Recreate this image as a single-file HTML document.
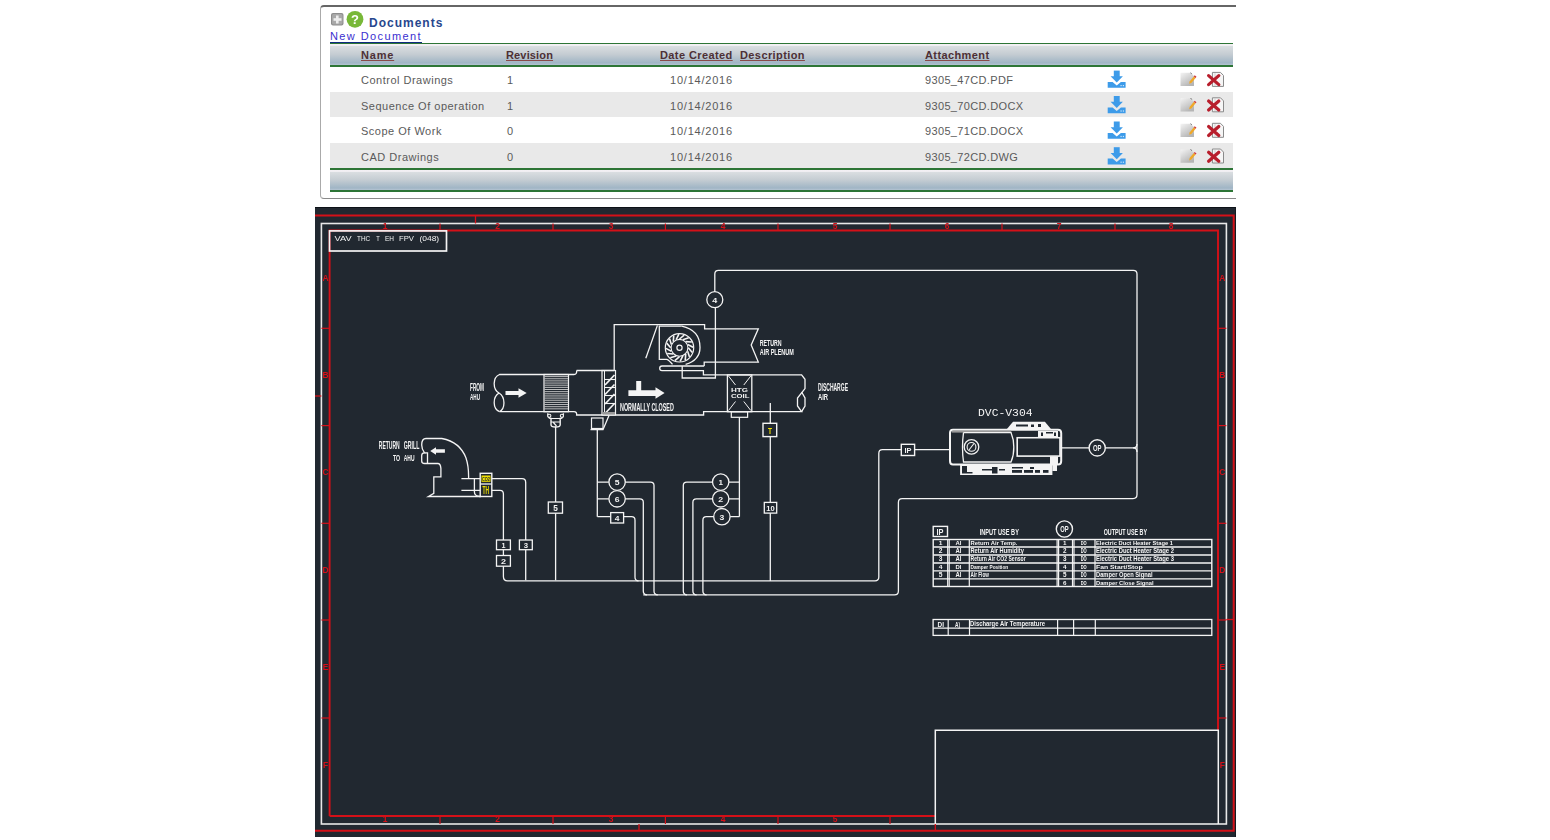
<!DOCTYPE html>
<html><head><meta charset="utf-8">
<style>
html,body{margin:0;padding:0;background:#fff;width:1550px;height:840px;overflow:hidden;position:relative;font-family:"Liberation Sans",sans-serif;}
.a{position:absolute;}
#panel{left:320px;top:5px;width:916px;height:194.3px;border-top:2px solid #666;border-left:1px solid #aaa;border-bottom:1.3px solid #8a8a8a;border-top-left-radius:4px;border-bottom-left-radius:4px;box-sizing:border-box;}
.hdr{left:330px;width:903px;background:linear-gradient(#f4f0f4 0,#f0eef2 1.5px,#dadee1 2px,#c4ccd2 50%,#a0b5c5 90%,#b4c4d2 100%);}
.gl{left:330px;width:903px;height:2px;background:#2d7536;}
.row{left:330px;width:903px;height:25px;}
.alt{background:#e9e9e9;}
.t{position:absolute;font-size:11px;color:#5a5a5a;letter-spacing:0.5px;white-space:nowrap;line-height:13px;}
.h{position:absolute;font-size:11px;font-weight:bold;color:#4d3035;text-decoration:underline;text-decoration-color:#8a4a4a;white-space:nowrap;line-height:13px;letter-spacing:0.4px}
#cad{left:315px;top:207px;width:921px;height:630px;background:#212830;border-top:1.5px solid #0d1218;border-right:1px solid #151a20;box-sizing:border-box;}
svg{position:absolute;left:0;top:0;}
</style></head><body>
<div id="panel" class="a"></div>
<!-- icons -->
<svg width="1550" height="210" style="left:0;top:0;z-index:3">
  <rect x="331" y="13" width="12.5" height="12.5" rx="2" fill="#8d8d8d"/>
  <rect x="332" y="14" width="10.5" height="10.5" rx="1.5" fill="#a9a9a9"/>
  <rect x="336" y="15.5" width="2.6" height="8" fill="#eee"/>
  <rect x="333.5" y="18.2" width="8" height="2.6" fill="#eee"/>
  <defs><linearGradient id="pg" x1="0" y1="0" x2="0.6" y2="1"><stop offset="0" stop-color="#f4f4f4"/><stop offset="1" stop-color="#b5b5b5"/></linearGradient></defs>
<g transform="translate(0,0)">
<rect x="1113.8" y="70.6" width="5.9" height="6.4" fill="#3d9be9"/>
<path d="M1110.6,76.3 H1122.9 L1116.75,82.6 Z" fill="#3d9be9"/>
<path d="M1107.7,82 H1112.6 L1116.75,85.5 L1120.9,82 H1125.6 V87.8 H1107.7 Z" fill="#3d9be9"/>
<rect x="1120.5" y="85" width="1.2" height="1.2" fill="#cfe6fa"/><rect x="1122.8" y="85" width="1.2" height="1.2" fill="#cfe6fa"/>
<path d="M1180.5,72.8 H1190 L1194,76 V86.1 H1180.5 Z" fill="url(#pg)"/>
<path d="M1189.6,81.5 L1193.8,76.4 L1195.6,77.9 L1191.4,83 L1189.2,83.8 Z" fill="#f0a828"/>
<path d="M1193.8,76.4 L1195.6,77.9 L1196.5,76.8 L1194.7,75.3 Z" fill="#d03838"/><path d="M1190.6,72.6 L1191.8,74.2" stroke="#555" stroke-width="0.8"/>
<path d="M1212.4,72.4 H1220.5 L1223.5,75.5 V86.4 H1212.4 Z" fill="#f6f6f6" stroke="#8a8a8a" stroke-width="1"/>
<path d="M1215,73.2 V85.6" stroke="#c8c8c8" stroke-width="0.8"/>
<path d="M1208.6,75.6 L1218.8,84.6 M1218.8,75.6 L1208.6,84.6" stroke="#b81e2c" stroke-width="3.2" stroke-linecap="round"/>
</g>
<g transform="translate(0,25.4)">
<rect x="1113.8" y="70.6" width="5.9" height="6.4" fill="#3d9be9"/>
<path d="M1110.6,76.3 H1122.9 L1116.75,82.6 Z" fill="#3d9be9"/>
<path d="M1107.7,82 H1112.6 L1116.75,85.5 L1120.9,82 H1125.6 V87.8 H1107.7 Z" fill="#3d9be9"/>
<rect x="1120.5" y="85" width="1.2" height="1.2" fill="#cfe6fa"/><rect x="1122.8" y="85" width="1.2" height="1.2" fill="#cfe6fa"/>
<path d="M1180.5,72.8 H1190 L1194,76 V86.1 H1180.5 Z" fill="url(#pg)"/>
<path d="M1189.6,81.5 L1193.8,76.4 L1195.6,77.9 L1191.4,83 L1189.2,83.8 Z" fill="#f0a828"/>
<path d="M1193.8,76.4 L1195.6,77.9 L1196.5,76.8 L1194.7,75.3 Z" fill="#d03838"/><path d="M1190.6,72.6 L1191.8,74.2" stroke="#555" stroke-width="0.8"/>
<path d="M1212.4,72.4 H1220.5 L1223.5,75.5 V86.4 H1212.4 Z" fill="#f6f6f6" stroke="#8a8a8a" stroke-width="1"/>
<path d="M1215,73.2 V85.6" stroke="#c8c8c8" stroke-width="0.8"/>
<path d="M1208.6,75.6 L1218.8,84.6 M1218.8,75.6 L1208.6,84.6" stroke="#b81e2c" stroke-width="3.2" stroke-linecap="round"/>
</g>
<g transform="translate(0,50.9)">
<rect x="1113.8" y="70.6" width="5.9" height="6.4" fill="#3d9be9"/>
<path d="M1110.6,76.3 H1122.9 L1116.75,82.6 Z" fill="#3d9be9"/>
<path d="M1107.7,82 H1112.6 L1116.75,85.5 L1120.9,82 H1125.6 V87.8 H1107.7 Z" fill="#3d9be9"/>
<rect x="1120.5" y="85" width="1.2" height="1.2" fill="#cfe6fa"/><rect x="1122.8" y="85" width="1.2" height="1.2" fill="#cfe6fa"/>
<path d="M1180.5,72.8 H1190 L1194,76 V86.1 H1180.5 Z" fill="url(#pg)"/>
<path d="M1189.6,81.5 L1193.8,76.4 L1195.6,77.9 L1191.4,83 L1189.2,83.8 Z" fill="#f0a828"/>
<path d="M1193.8,76.4 L1195.6,77.9 L1196.5,76.8 L1194.7,75.3 Z" fill="#d03838"/><path d="M1190.6,72.6 L1191.8,74.2" stroke="#555" stroke-width="0.8"/>
<path d="M1212.4,72.4 H1220.5 L1223.5,75.5 V86.4 H1212.4 Z" fill="#f6f6f6" stroke="#8a8a8a" stroke-width="1"/>
<path d="M1215,73.2 V85.6" stroke="#c8c8c8" stroke-width="0.8"/>
<path d="M1208.6,75.6 L1218.8,84.6 M1218.8,75.6 L1208.6,84.6" stroke="#b81e2c" stroke-width="3.2" stroke-linecap="round"/>
</g>
<g transform="translate(0,76.6)">
<rect x="1113.8" y="70.6" width="5.9" height="6.4" fill="#3d9be9"/>
<path d="M1110.6,76.3 H1122.9 L1116.75,82.6 Z" fill="#3d9be9"/>
<path d="M1107.7,82 H1112.6 L1116.75,85.5 L1120.9,82 H1125.6 V87.8 H1107.7 Z" fill="#3d9be9"/>
<rect x="1120.5" y="85" width="1.2" height="1.2" fill="#cfe6fa"/><rect x="1122.8" y="85" width="1.2" height="1.2" fill="#cfe6fa"/>
<path d="M1180.5,72.8 H1190 L1194,76 V86.1 H1180.5 Z" fill="url(#pg)"/>
<path d="M1189.6,81.5 L1193.8,76.4 L1195.6,77.9 L1191.4,83 L1189.2,83.8 Z" fill="#f0a828"/>
<path d="M1193.8,76.4 L1195.6,77.9 L1196.5,76.8 L1194.7,75.3 Z" fill="#d03838"/><path d="M1190.6,72.6 L1191.8,74.2" stroke="#555" stroke-width="0.8"/>
<path d="M1212.4,72.4 H1220.5 L1223.5,75.5 V86.4 H1212.4 Z" fill="#f6f6f6" stroke="#8a8a8a" stroke-width="1"/>
<path d="M1215,73.2 V85.6" stroke="#c8c8c8" stroke-width="0.8"/>
<path d="M1208.6,75.6 L1218.8,84.6 M1218.8,75.6 L1208.6,84.6" stroke="#b81e2c" stroke-width="3.2" stroke-linecap="round"/>
</g>
<circle cx="355" cy="19.3" r="8.4" fill="#78b838"/>
  <text x="355" y="24.2" font-size="13" font-weight="bold" fill="#fff" text-anchor="middle" font-family="Liberation Sans">?</text>
</svg>
<div class="t" style="left:369px;top:16px;font-size:12px;font-weight:bold;color:#27478e;line-height:14px;letter-spacing:1px">Documents</div>
<div class="t" style="left:330px;top:30px;font-size:11px;color:#3a2fd0;line-height:13px;letter-spacing:1.4px">New Document</div>
<div class="a" style="left:330px;top:41.6px;width:92px;height:1.6px;background:#0d2b7d;z-index:2"></div>

<div class="a gl" style="top:42.6px;height:1.6px"></div>
<div class="a hdr" style="top:44.2px;height:20.8px"></div>
<div class="a gl" style="top:65px;height:1.6px"></div>
<div class="a" style="left:330px;width:903px;top:66.6px;height:0.4px;background:#fff"></div>
<div class="a row" style="top:66.5px"></div>
<div class="a row alt" style="top:92px;height:25.3px"></div>
<div class="a row" style="top:117.3px"></div>
<div class="a row alt" style="top:142.6px;height:25.3px"></div>
<div class="a gl" style="top:167.9px"></div>
<div class="a hdr" style="top:170px;height:20px"></div>
<div class="a gl" style="top:190px"></div>

<div class="h" style="left:361px;top:48.7px;letter-spacing:0.8px">Name</div>
<div class="h" style="left:506px;top:48.7px;letter-spacing:0.15px">Revision</div>
<div class="h" style="left:660px;top:48.7px">Date Created</div>
<div class="h" style="left:740px;top:48.7px">Description</div>
<div class="h" style="left:925px;top:48.7px">Attachment</div>

<div class="t" style="left:361px;top:73.9px">Control Drawings</div>
<div class="t" style="left:507px;top:73.9px">1</div>
<div class="t" style="left:670px;top:73.9px;letter-spacing:0.78px">10/14/2016</div>
<div class="t" style="left:925px;top:73.9px;letter-spacing:0.35px">9305_47CD.PDF</div>
<div class="t" style="left:361px;top:99.9px">Sequence Of operation</div>
<div class="t" style="left:507px;top:99.9px">1</div>
<div class="t" style="left:670px;top:99.9px;letter-spacing:0.78px">10/14/2016</div>
<div class="t" style="left:925px;top:99.9px;letter-spacing:0.35px">9305_70CD.DOCX</div>
<div class="t" style="left:361px;top:125.3px">Scope Of Work</div>
<div class="t" style="left:507px;top:125.3px">0</div>
<div class="t" style="left:670px;top:125.3px;letter-spacing:0.78px">10/14/2016</div>
<div class="t" style="left:925px;top:125.3px;letter-spacing:0.35px">9305_71CD.DOCX</div>
<div class="t" style="left:361px;top:150.7px">CAD Drawings</div>
<div class="t" style="left:507px;top:150.7px">0</div>
<div class="t" style="left:670px;top:150.7px;letter-spacing:0.78px">10/14/2016</div>
<div class="t" style="left:925px;top:150.7px;letter-spacing:0.35px">9305_72CD.DWG</div>

<div id="cad" class="a"></div>
<svg id="draw" width="1550" height="840" style="left:0;top:0;will-change:transform">
<path d="M315,215.5 H1233.7 V830.7 H315" stroke="#d41018" stroke-width="2" fill="none" />
<path d="M329.6,816 V230.5 H1218 V731 M935.3,816 H329.6" stroke="#d41018" stroke-width="1.9" fill="none" />
<rect x="321.4" y="223.5" width="905.00" height="600.50" stroke="#e8e8e8" stroke-width="1.6" fill="none"/>
<line x1="440" y1="223.5" x2="440" y2="230.5" stroke="#d41018" stroke-width="1.2"/>
<line x1="440" y1="816" x2="440" y2="824" stroke="#d41018" stroke-width="1.2"/>
<line x1="553" y1="223.5" x2="553" y2="230.5" stroke="#d41018" stroke-width="1.2"/>
<line x1="553" y1="816" x2="553" y2="824" stroke="#d41018" stroke-width="1.2"/>
<line x1="665.4" y1="223.5" x2="665.4" y2="230.5" stroke="#d41018" stroke-width="1.2"/>
<line x1="665.4" y1="816" x2="665.4" y2="824" stroke="#d41018" stroke-width="1.2"/>
<line x1="778" y1="223.5" x2="778" y2="230.5" stroke="#d41018" stroke-width="1.2"/>
<line x1="778" y1="816" x2="778" y2="824" stroke="#d41018" stroke-width="1.2"/>
<line x1="890" y1="223.5" x2="890" y2="230.5" stroke="#d41018" stroke-width="1.2"/>
<line x1="890" y1="816" x2="890" y2="824" stroke="#d41018" stroke-width="1.2"/>
<line x1="1002" y1="223.5" x2="1002" y2="230.5" stroke="#d41018" stroke-width="1.2"/>
<line x1="1115" y1="223.5" x2="1115" y2="230.5" stroke="#d41018" stroke-width="1.2"/>
<line x1="475.5" y1="215.4" x2="475.5" y2="223.5" stroke="#d41018" stroke-width="1.3"/>
<line x1="639" y1="824" x2="639" y2="830.7" stroke="#d41018" stroke-width="1.3"/>
<line x1="935.3" y1="824" x2="935.3" y2="830.7" stroke="#d41018" stroke-width="1.3"/>
<line x1="321.4" y1="328.3" x2="329.6" y2="328.3" stroke="#d41018" stroke-width="1.2"/>
<line x1="1218.3" y1="328.3" x2="1226.4" y2="328.3" stroke="#d41018" stroke-width="1.2"/>
<line x1="321.4" y1="425.6" x2="329.6" y2="425.6" stroke="#d41018" stroke-width="1.2"/>
<line x1="1218.3" y1="425.6" x2="1226.4" y2="425.6" stroke="#d41018" stroke-width="1.2"/>
<line x1="321.4" y1="523.3" x2="329.6" y2="523.3" stroke="#d41018" stroke-width="1.2"/>
<line x1="1218.3" y1="523.3" x2="1226.4" y2="523.3" stroke="#d41018" stroke-width="1.2"/>
<line x1="321.4" y1="620" x2="329.6" y2="620" stroke="#d41018" stroke-width="1.2"/>
<line x1="1218.3" y1="620" x2="1226.4" y2="620" stroke="#d41018" stroke-width="1.2"/>
<line x1="321.4" y1="718" x2="329.6" y2="718" stroke="#d41018" stroke-width="1.2"/>
<line x1="1218.3" y1="718" x2="1226.4" y2="718" stroke="#d41018" stroke-width="1.2"/>
<line x1="315" y1="396" x2="321.4" y2="396" stroke="#d41018" stroke-width="1.3"/>
<line x1="1226.4" y1="619.5" x2="1234" y2="619.5" stroke="#d41018" stroke-width="1.3"/>
<text x="385" y="229.2" font-family="Liberation Sans" font-size="8.5" font-weight="bold" fill="#d41018" text-anchor="middle">1</text>
<text x="385" y="822.2" font-family="Liberation Sans" font-size="8.5" font-weight="bold" fill="#d41018" text-anchor="middle">1</text>
<text x="497.5" y="229.2" font-family="Liberation Sans" font-size="8.5" font-weight="bold" fill="#d41018" text-anchor="middle">2</text>
<text x="497.5" y="822.2" font-family="Liberation Sans" font-size="8.5" font-weight="bold" fill="#d41018" text-anchor="middle">2</text>
<text x="611" y="229.2" font-family="Liberation Sans" font-size="8.5" font-weight="bold" fill="#d41018" text-anchor="middle">3</text>
<text x="611" y="822.2" font-family="Liberation Sans" font-size="8.5" font-weight="bold" fill="#d41018" text-anchor="middle">3</text>
<text x="723" y="229.2" font-family="Liberation Sans" font-size="8.5" font-weight="bold" fill="#d41018" text-anchor="middle">4</text>
<text x="723" y="822.2" font-family="Liberation Sans" font-size="8.5" font-weight="bold" fill="#d41018" text-anchor="middle">4</text>
<text x="835" y="229.2" font-family="Liberation Sans" font-size="8.5" font-weight="bold" fill="#d41018" text-anchor="middle">5</text>
<text x="835" y="822.2" font-family="Liberation Sans" font-size="8.5" font-weight="bold" fill="#d41018" text-anchor="middle">5</text>
<text x="947" y="229.2" font-family="Liberation Sans" font-size="8.5" font-weight="bold" fill="#d41018" text-anchor="middle">6</text>
<text x="1059" y="229.2" font-family="Liberation Sans" font-size="8.5" font-weight="bold" fill="#d41018" text-anchor="middle">7</text>
<text x="1171" y="229.2" font-family="Liberation Sans" font-size="8.5" font-weight="bold" fill="#d41018" text-anchor="middle">8</text>
<text x="325.5" y="280.8" font-family="Liberation Sans" font-size="8.5" font-weight="bold" fill="#d41018" text-anchor="middle">A</text>
<text x="1222.3" y="280.8" font-family="Liberation Sans" font-size="8.5" font-weight="bold" fill="#d41018" text-anchor="middle">A</text>
<text x="325.5" y="377.8" font-family="Liberation Sans" font-size="8.5" font-weight="bold" fill="#d41018" text-anchor="middle">B</text>
<text x="1222.3" y="377.8" font-family="Liberation Sans" font-size="8.5" font-weight="bold" fill="#d41018" text-anchor="middle">B</text>
<text x="325.5" y="474.8" font-family="Liberation Sans" font-size="8.5" font-weight="bold" fill="#d41018" text-anchor="middle">C</text>
<text x="1222.3" y="474.8" font-family="Liberation Sans" font-size="8.5" font-weight="bold" fill="#d41018" text-anchor="middle">C</text>
<text x="325.5" y="572.8" font-family="Liberation Sans" font-size="8.5" font-weight="bold" fill="#d41018" text-anchor="middle">D</text>
<text x="1222.3" y="572.8" font-family="Liberation Sans" font-size="8.5" font-weight="bold" fill="#d41018" text-anchor="middle">D</text>
<text x="325.5" y="670.3" font-family="Liberation Sans" font-size="8.5" font-weight="bold" fill="#d41018" text-anchor="middle">E</text>
<text x="1222.3" y="670.3" font-family="Liberation Sans" font-size="8.5" font-weight="bold" fill="#d41018" text-anchor="middle">E</text>
<text x="325.5" y="767.8" font-family="Liberation Sans" font-size="8.5" font-weight="bold" fill="#d41018" text-anchor="middle">F</text>
<text x="1222.3" y="767.8" font-family="Liberation Sans" font-size="8.5" font-weight="bold" fill="#d41018" text-anchor="middle">F</text>
<rect x="329.5" y="230.9" width="117.00" height="20.10" stroke="#f4f4f4" stroke-width="1.7" fill="none"/>
<text x="334.5" y="241.3" font-family="Liberation Sans" font-size="7.92" font-weight="normal" fill="#f4f4f4" textLength="17.10" lengthAdjust="spacingAndGlyphs">VAV</text>
<text x="357" y="241.3" font-family="Liberation Sans" font-size="7.92" font-weight="normal" fill="#f4f4f4" textLength="13.10" lengthAdjust="spacingAndGlyphs">THC</text>
<text x="376.3" y="241.3" font-family="Liberation Sans" font-size="7.92" font-weight="normal" fill="#f4f4f4" textLength="3.50" lengthAdjust="spacingAndGlyphs">T</text>
<text x="385" y="241.3" font-family="Liberation Sans" font-size="7.92" font-weight="normal" fill="#f4f4f4" textLength="9.00" lengthAdjust="spacingAndGlyphs">EH</text>
<text x="399" y="241.3" font-family="Liberation Sans" font-size="7.92" font-weight="normal" fill="#f4f4f4" textLength="15.00" lengthAdjust="spacingAndGlyphs">FPV</text>
<text x="419.4" y="241.3" font-family="Liberation Sans" font-size="7.92" font-weight="normal" fill="#f4f4f4" textLength="19.80" lengthAdjust="spacingAndGlyphs">(048)</text>
<path d="M714.8,291.7 V274 Q714.8,270.3 718.5,270.3 H1133.3 Q1137,270.3 1137,274 V494.6 Q1137,498.6 1133,498.6 H902.2 Q898.4,498.6 898.4,502.4 V591 Q898.4,594.9 894.5,594.9 H643.3" stroke="#f4f4f4" stroke-width="1.3" fill="none" />
<circle cx="714.8" cy="299.7" r="8" stroke="#f4f4f4" stroke-width="1.3" fill="#212830"/>
<text x="712.3" y="302.5" font-family="Liberation Sans" font-size="7.64" font-weight="bold" fill="#f4f4f4" textLength="5.00" lengthAdjust="spacingAndGlyphs">4</text>
<path d="M715.4,307.7 V378 H682.2 V366" stroke="#f4f4f4" stroke-width="1.3" fill="none" />
<path d="M614.2,371 V324.6 H704.6 V328.8 H758.3 L751.2,345 L758.3,362.1 H704.2 V366" stroke="#f4f4f4" stroke-width="1.3" fill="none" />
<line x1="645.8" y1="358.2" x2="657.4" y2="325.4" stroke="#f4f4f4" stroke-width="1.3"/>
<path d="M681.8,326.1 H659.3 V359.4 H666.7 Q669,360 672.5,364.4" stroke="#f4f4f4" stroke-width="1.3" fill="none" />
<path d="M681.8,326.1 Q700,330 700,347.4 Q700,360 685.6,364.4" stroke="#f4f4f4" stroke-width="1.3" fill="none" />
<circle cx="679.5" cy="347.8" r="14.2" stroke="#f4f4f4" stroke-width="1.2" fill="#212830"/>
<circle cx="679.5" cy="347.8" r="8.4" stroke="#f4f4f4" stroke-width="1.1" fill="#212830"/>
<line x1="688.3" y1="347.8" x2="692.28" y2="352.46" stroke="#f4f4f4" stroke-width="1.6"/>
<line x1="687.63" y1="351.17" x2="689.52" y2="357.0" stroke="#f4f4f4" stroke-width="1.6"/>
<line x1="685.72" y1="354.02" x2="685.24" y2="360.13" stroke="#f4f4f4" stroke-width="1.6"/>
<line x1="682.87" y1="355.93" x2="680.08" y2="361.39" stroke="#f4f4f4" stroke-width="1.6"/>
<line x1="679.5" y1="356.6" x2="674.84" y2="360.58" stroke="#f4f4f4" stroke-width="1.6"/>
<line x1="676.13" y1="355.93" x2="670.3" y2="357.82" stroke="#f4f4f4" stroke-width="1.6"/>
<line x1="673.28" y1="354.02" x2="667.17" y2="353.54" stroke="#f4f4f4" stroke-width="1.6"/>
<line x1="671.37" y1="351.17" x2="665.91" y2="348.38" stroke="#f4f4f4" stroke-width="1.6"/>
<line x1="670.7" y1="347.8" x2="666.72" y2="343.14" stroke="#f4f4f4" stroke-width="1.6"/>
<line x1="671.37" y1="344.43" x2="669.48" y2="338.6" stroke="#f4f4f4" stroke-width="1.6"/>
<line x1="673.28" y1="341.58" x2="673.76" y2="335.47" stroke="#f4f4f4" stroke-width="1.6"/>
<line x1="676.13" y1="339.67" x2="678.92" y2="334.21" stroke="#f4f4f4" stroke-width="1.6"/>
<line x1="679.5" y1="339.0" x2="684.16" y2="335.02" stroke="#f4f4f4" stroke-width="1.6"/>
<line x1="682.87" y1="339.67" x2="688.7" y2="337.78" stroke="#f4f4f4" stroke-width="1.6"/>
<line x1="685.72" y1="341.58" x2="691.83" y2="342.06" stroke="#f4f4f4" stroke-width="1.6"/>
<line x1="687.63" y1="344.43" x2="693.09" y2="347.22" stroke="#f4f4f4" stroke-width="1.6"/>
<circle cx="679.5" cy="347.8" r="2.6" stroke="#f4f4f4" stroke-width="1.2" fill="#212830"/>
<path d="M704.2,366 H662 Q659.7,366 659.7,368.3 Q659.7,370.6 662,370.6 H703.4 V374.9 H801.6 L805,379.3 V388.6 L797.5,398 V406 L801.6,411.7 H703.6 V415 H576.6 V414.6" stroke="#f4f4f4" stroke-width="1.3" fill="none" />
<path d="M801.6,392 L805,398 V406 L801.6,411.7" stroke="#f4f4f4" stroke-width="1.3" fill="none" />
<path d="M576.6,370.5 H614.2" stroke="#f4f4f4" stroke-width="1.3" fill="none" />
<path d="M576.6,370.5 Q577,374.5 574,374.5 H499.5 C492.5,377.5 492.5,389 499,393 C505.5,397 505.5,408.5 499.5,411.7 H574 Q577,411.7 576.6,415" stroke="#f4f4f4" stroke-width="1.3" fill="none" />
<path d="M499,393 C492.5,397 492.5,408.5 499.5,411.7" stroke="#f4f4f4" stroke-width="1.3" fill="none" />
<rect x="544" y="374.5" width="24.50" height="37.20" stroke="#f4f4f4" stroke-width="1.2" fill="none"/>
<line x1="544.5" y1="376.6" x2="568" y2="376.6" stroke="#cfcfcf" stroke-width="0.9"/>
<line x1="544.5" y1="378.75" x2="568" y2="378.75" stroke="#cfcfcf" stroke-width="0.9"/>
<line x1="544.5" y1="380.9" x2="568" y2="380.9" stroke="#cfcfcf" stroke-width="0.9"/>
<line x1="544.5" y1="383.05" x2="568" y2="383.05" stroke="#cfcfcf" stroke-width="0.9"/>
<line x1="544.5" y1="385.2" x2="568" y2="385.2" stroke="#cfcfcf" stroke-width="0.9"/>
<line x1="544.5" y1="387.35" x2="568" y2="387.35" stroke="#cfcfcf" stroke-width="0.9"/>
<line x1="544.5" y1="389.5" x2="568" y2="389.5" stroke="#cfcfcf" stroke-width="0.9"/>
<line x1="544.5" y1="391.65" x2="568" y2="391.65" stroke="#cfcfcf" stroke-width="0.9"/>
<line x1="544.5" y1="393.8" x2="568" y2="393.8" stroke="#cfcfcf" stroke-width="0.9"/>
<line x1="544.5" y1="395.95" x2="568" y2="395.95" stroke="#cfcfcf" stroke-width="0.9"/>
<line x1="544.5" y1="398.1" x2="568" y2="398.1" stroke="#cfcfcf" stroke-width="0.9"/>
<line x1="544.5" y1="400.25" x2="568" y2="400.25" stroke="#cfcfcf" stroke-width="0.9"/>
<line x1="544.5" y1="402.4" x2="568" y2="402.4" stroke="#cfcfcf" stroke-width="0.9"/>
<line x1="544.5" y1="404.55" x2="568" y2="404.55" stroke="#cfcfcf" stroke-width="0.9"/>
<line x1="544.5" y1="406.7" x2="568" y2="406.7" stroke="#cfcfcf" stroke-width="0.9"/>
<line x1="544.5" y1="408.85" x2="568" y2="408.85" stroke="#cfcfcf" stroke-width="0.9"/>
<path d="M505.5,391 H518.5 V388.2 L526.7,393 L518.5,397.8 V395 H505.5 Z" fill="#f4f4f4"/>
<rect x="602" y="370.5" width="13.50" height="44.50" stroke="#f4f4f4" stroke-width="1.2" fill="none"/>
<line x1="604.5" y1="371" x2="604.5" y2="414.5" stroke="#f4f4f4" stroke-width="1"/>
<line x1="604.5" y1="379.5" x2="615" y2="379.5" stroke="#f4f4f4" stroke-width="1.1"/>
<line x1="604.5" y1="387.5" x2="615" y2="387.5" stroke="#f4f4f4" stroke-width="1.1"/>
<line x1="604.5" y1="395.5" x2="615" y2="395.5" stroke="#f4f4f4" stroke-width="1.1"/>
<line x1="604.5" y1="403.5" x2="615" y2="403.5" stroke="#f4f4f4" stroke-width="1.1"/>
<line x1="605" y1="385.0" x2="614.5" y2="375.0" stroke="#f4f4f4" stroke-width="1.7"/>
<line x1="605" y1="394.5" x2="614.5" y2="384.5" stroke="#f4f4f4" stroke-width="1.7"/>
<line x1="605" y1="404.0" x2="614.5" y2="394.0" stroke="#f4f4f4" stroke-width="1.7"/>
<line x1="605" y1="413.5" x2="614.5" y2="403.5" stroke="#f4f4f4" stroke-width="1.7"/>
<rect x="602.5" y="412" width="12.50" height="2.50" fill="#9a9a9a"/>
<path d="M590.5,429.7 H603 L609,415.5" stroke="#f4f4f4" stroke-width="1.3" fill="none" />
<rect x="591.5" y="418" width="11.50" height="10.50" stroke="#f4f4f4" stroke-width="1.2" fill="#212830"/>
<path d="M597.3,429.7 V516.7" stroke="#f4f4f4" stroke-width="1.3" fill="none" />
<path d="M547.8,413.2 Q547.5,418.5 551,418.5 V424.8 Q551,427 555.6,427 Q560.2,427 560.2,424.8 V418.5 Q563.7,418.5 563.4,413.2" stroke="#f4f4f4" stroke-width="1.4" fill="none" />
<path d="M551,418.5 H560.2 M551,422 H560.2 M553,422 L556.5,426" stroke="#f4f4f4" stroke-width="1.2" fill="none" />
<circle cx="549.3" cy="415.8" r="1.6" stroke="#f4f4f4" stroke-width="1.1" fill="#212830"/>
<circle cx="561.9" cy="415.8" r="1.6" stroke="#f4f4f4" stroke-width="1.1" fill="#212830"/>
<path d="M555.6,426.5 V580.3" stroke="#f4f4f4" stroke-width="1.3" fill="none" />
<rect x="548.3" y="502" width="14.20" height="11.20" stroke="#f4f4f4" stroke-width="1.3" fill="#212830"/>
<text x="553.2" y="510.5" font-family="Liberation Sans" font-size="8.33" font-weight="bold" fill="#f4f4f4" textLength="4.60" lengthAdjust="spacingAndGlyphs">5</text>
<path d="M636.2,381 H641.2 V390.2 H655.5 V387.3 L664.6,393 L655.5,398.7 V395.9 H628.4 V390.2 H636.2 Z" fill="#f4f4f4"/>
<text x="620" y="410.8" font-family="Liberation Sans" font-size="10.83" font-weight="bold" fill="#f4f4f4" textLength="53.80" lengthAdjust="spacingAndGlyphs">NORMALLY CLOSED</text>
<text x="470" y="391.4" font-family="Liberation Sans" font-size="10.56" font-weight="bold" fill="#f4f4f4" textLength="14.00" lengthAdjust="spacingAndGlyphs">FROM</text>
<text x="470" y="400" font-family="Liberation Sans" font-size="8.75" font-weight="bold" fill="#f4f4f4" textLength="10.00" lengthAdjust="spacingAndGlyphs">AHU</text>
<text x="759.7" y="345.5" font-family="Liberation Sans" font-size="9.03" font-weight="bold" fill="#f4f4f4" textLength="22.00" lengthAdjust="spacingAndGlyphs">RETURN</text>
<text x="759.7" y="354.7" font-family="Liberation Sans" font-size="9.86" font-weight="bold" fill="#f4f4f4" textLength="34.10" lengthAdjust="spacingAndGlyphs">AIR PLENUM</text>
<text x="817.9" y="390.9" font-family="Liberation Sans" font-size="10.00" font-weight="bold" fill="#f4f4f4" textLength="30.10" lengthAdjust="spacingAndGlyphs">DISCHARGE</text>
<text x="817.9" y="399.7" font-family="Liberation Sans" font-size="8.61" font-weight="bold" fill="#f4f4f4" textLength="10.10" lengthAdjust="spacingAndGlyphs">AIR</text>
<rect x="727.4" y="374.9" width="24.40" height="36.80" stroke="#f4f4f4" stroke-width="1.3" fill="none"/>
<line x1="728.5" y1="376" x2="735.5" y2="385" stroke="#f4f4f4" stroke-width="1"/>
<line x1="750.8" y1="376" x2="743.8" y2="385" stroke="#f4f4f4" stroke-width="1"/>
<line x1="728.5" y1="410.5" x2="735.5" y2="401.5" stroke="#f4f4f4" stroke-width="1"/>
<line x1="750.8" y1="410.5" x2="743.8" y2="401.5" stroke="#f4f4f4" stroke-width="1"/>
<text x="731" y="392.3" font-family="Liberation Sans" font-size="4.58" font-weight="bold" fill="#f4f4f4" textLength="17.00" lengthAdjust="spacingAndGlyphs">HTG</text>
<text x="731" y="397.6" font-family="Liberation Sans" font-size="4.86" font-weight="bold" fill="#f4f4f4" textLength="18.50" lengthAdjust="spacingAndGlyphs">COIL</text>
<rect x="731.3" y="411.7" width="16.30" height="5.60" stroke="#f4f4f4" stroke-width="1.2" fill="none"/>
<path d="M739.4,417.3 V516.7" stroke="#f4f4f4" stroke-width="1.3" fill="none" />
<path d="M770.3,403.1 V581" stroke="#f4f4f4" stroke-width="1.3" fill="none" />
<rect x="763" y="423.3" width="13.70" height="13.30" stroke="#f4f4f4" stroke-width="1.4" fill="#212830"/>
<text x="768" y="433.5" font-family="Liberation Sans" font-size="9.72" font-weight="bold" fill="#f0e000" textLength="4.00" lengthAdjust="spacingAndGlyphs">T</text>
<rect x="764.3" y="502.4" width="12.40" height="10.70" stroke="#f4f4f4" stroke-width="1.3" fill="#212830"/>
<text x="766.3" y="510.5" font-family="Liberation Sans" font-size="7.64" font-weight="bold" fill="#f4f4f4" textLength="8.40" lengthAdjust="spacingAndGlyphs">10</text>
<path d="M481,496.5 H428.4 L433.8,493.4 V476.9 H440.9 V468.4 Q440.5,463.5 437.8,463.5 H424.5 Q421.7,463.5 421.7,461 V455.5 Q421.7,452.8 424.5,452.8 Q421.7,449 421.7,445 Q421.7,438.5 426,438.5 H441.8 Q460,442 466,458 Q468.6,465.7 468.6,476.4 V478.7" stroke="#f4f4f4" stroke-width="1.3" fill="none" />
<path d="M424.5,452.8 H427.5 V463.5" stroke="#f4f4f4" stroke-width="1.3" fill="none" />
<path d="M461.4,478.7 H480.2 M461.4,490.3 H480.2 M474.4,478.7 V492 Q474.4,496 480,496.5" stroke="#f4f4f4" stroke-width="1.3" fill="none" />
<path d="M430.2,451 L436,447.3 V449.3 H444.9 V452.7 H436 V454.7 Z" fill="#f4f4f4"/>
<text x="378.8" y="448.8" font-family="Liberation Sans" font-size="10.83" font-weight="bold" fill="#f4f4f4" textLength="20.90" lengthAdjust="spacingAndGlyphs">RETURN</text>
<text x="403.8" y="448.8" font-family="Liberation Sans" font-size="10.83" font-weight="bold" fill="#f4f4f4" textLength="15.60" lengthAdjust="spacingAndGlyphs">GRILL</text>
<text x="393" y="460.7" font-family="Liberation Sans" font-size="9.31" font-weight="bold" fill="#f4f4f4" textLength="7.20" lengthAdjust="spacingAndGlyphs">TO</text>
<text x="403.8" y="460.7" font-family="Liberation Sans" font-size="9.31" font-weight="bold" fill="#f4f4f4" textLength="10.70" lengthAdjust="spacingAndGlyphs">AHU</text>
<rect x="480.2" y="473.3" width="11.60" height="23.20" stroke="#f4f4f4" stroke-width="1.4" fill="none"/>
<line x1="480.2" y1="484" x2="491.8" y2="484" stroke="#f4f4f4" stroke-width="1.3"/>
<rect x="481.5" y="475.5" width="9.00" height="6.30" fill="#f0e000"/>
<text x="482" y="480.8" font-family="Liberation Sans" font-size="5.97" font-weight="bold" fill="#212830" textLength="8.00" lengthAdjust="spacingAndGlyphs">CO2</text>
<text x="482.5" y="494" font-family="Liberation Sans" font-size="10.42" font-weight="bold" fill="#f0e000" textLength="6.50" lengthAdjust="spacingAndGlyphs">TH</text>
<path d="M491.8,478.7 H522 Q525.7,478.7 525.7,482.4 V580.3" stroke="#f4f4f4" stroke-width="1.3" fill="none" />
<path d="M491.8,490.3 H500 Q503.4,490.3 503.4,494 V576.5 Q503.4,580.8 507.5,580.8 H875 Q878.8,580.8 878.8,577 V453.5 Q878.8,449.7 882.5,449.7 H901.3 M914.6,449.7 H949.5" stroke="#f4f4f4" stroke-width="1.3" fill="none" />
<rect x="496.5" y="540" width="13.90" height="9.70" stroke="#f4f4f4" stroke-width="1.3" fill="#212830"/>
<text x="501.5" y="547.5" font-family="Liberation Sans" font-size="6.94" font-weight="bold" fill="#f4f4f4" textLength="4.00" lengthAdjust="spacingAndGlyphs">1</text>
<rect x="496.5" y="555.5" width="13.90" height="10.70" stroke="#f4f4f4" stroke-width="1.3" fill="#212830"/>
<text x="501" y="563.5" font-family="Liberation Sans" font-size="7.64" font-weight="bold" fill="#f4f4f4" textLength="5.00" lengthAdjust="spacingAndGlyphs">2</text>
<rect x="519.4" y="540" width="12.90" height="9.70" stroke="#f4f4f4" stroke-width="1.3" fill="#212830"/>
<text x="523.7" y="547.5" font-family="Liberation Sans" font-size="6.94" font-weight="bold" fill="#f4f4f4" textLength="4.30" lengthAdjust="spacingAndGlyphs">3</text>
<path d="M597.4,482.1 H608.8 M597.4,498.8 H608.8 M597.4,516.7 H610.7" stroke="#f4f4f4" stroke-width="1.3" fill="none" />
<circle cx="617.1" cy="482.1" r="8.2" stroke="#f4f4f4" stroke-width="1.3" fill="#212830"/>
<text x="614.7" y="485" font-family="Liberation Sans" font-size="7.64" font-weight="bold" fill="#f4f4f4" textLength="4.80" lengthAdjust="spacingAndGlyphs">5</text>
<circle cx="617.1" cy="498.8" r="8.2" stroke="#f4f4f4" stroke-width="1.3" fill="#212830"/>
<text x="614.7" y="501.5" font-family="Liberation Sans" font-size="7.64" font-weight="bold" fill="#f4f4f4" textLength="4.80" lengthAdjust="spacingAndGlyphs">6</text>
<rect x="610.7" y="512.6" width="12.90" height="10.40" stroke="#f4f4f4" stroke-width="1.3" fill="#212830"/>
<text x="614.8" y="520.5" font-family="Liberation Sans" font-size="7.64" font-weight="bold" fill="#f4f4f4" textLength="4.70" lengthAdjust="spacingAndGlyphs">4</text>
<path d="M625.3,482.1 H650.5 Q654,482.1 654,485.6 V591 Q654,594.8 657.8,594.8" stroke="#f4f4f4" stroke-width="1.3" fill="none" />
<path d="M625.3,498.8 H639.8 Q643.3,498.8 643.3,502.3 V591 Q643.3,594.8 647,594.8" stroke="#f4f4f4" stroke-width="1.3" fill="none" />
<path d="M623.6,516.7 H631.5 Q635,516.7 635,520.2 V577.3 Q635,580.8 638.5,580.8" stroke="#f4f4f4" stroke-width="1.3" fill="none" />
<path d="M739.4,482.1 H729 M739.4,498.8 H729 M739.4,516.7 H730.2" stroke="#f4f4f4" stroke-width="1.3" fill="none" />
<circle cx="720.7" cy="482.1" r="8.2" stroke="#f4f4f4" stroke-width="1.3" fill="#212830"/>
<text x="718.5" y="485" font-family="Liberation Sans" font-size="7.64" font-weight="bold" fill="#f4f4f4" textLength="4.50" lengthAdjust="spacingAndGlyphs">1</text>
<circle cx="720.7" cy="498.8" r="8.2" stroke="#f4f4f4" stroke-width="1.3" fill="#212830"/>
<text x="718.3" y="501.5" font-family="Liberation Sans" font-size="7.64" font-weight="bold" fill="#f4f4f4" textLength="4.90" lengthAdjust="spacingAndGlyphs">2</text>
<circle cx="721.9" cy="516.7" r="8.2" stroke="#f4f4f4" stroke-width="1.3" fill="#212830"/>
<text x="719.5" y="519.5" font-family="Liberation Sans" font-size="7.64" font-weight="bold" fill="#f4f4f4" textLength="4.80" lengthAdjust="spacingAndGlyphs">3</text>
<path d="M712.5,482.1 H686.8 Q683.3,482.1 683.3,485.6 V591 Q683.3,594.8 687,594.8" stroke="#f4f4f4" stroke-width="1.3" fill="none" />
<path d="M712.5,498.8 H696.4 Q692.9,498.8 692.9,502.3 V591 Q692.9,594.8 696.6,594.8" stroke="#f4f4f4" stroke-width="1.3" fill="none" />
<path d="M713.7,516.7 H706.4 Q702.9,516.7 702.9,520.2 V591 Q702.9,594.8 706.6,594.8" stroke="#f4f4f4" stroke-width="1.3" fill="none" />
<rect x="901.3" y="444.3" width="13.30" height="11.20" stroke="#f4f4f4" stroke-width="1.4" fill="#212830"/>
<text x="904.5" y="452.8" font-family="Liberation Sans" font-size="7.64" font-weight="bold" fill="#f4f4f4" textLength="7.00" lengthAdjust="spacingAndGlyphs">IP</text>
<path d="M1061.2,447.9 H1089 M1105.3,447.9 H1133 Q1137,447.9 1137,444" stroke="#f4f4f4" stroke-width="1.3" fill="none" />
<path d="M1133,447.9 Q1137,447.9 1137,452" stroke="#f4f4f4" stroke-width="1.3" fill="none" />
<circle cx="1097.2" cy="447.9" r="8.1" stroke="#f4f4f4" stroke-width="1.4" fill="#212830"/>
<text x="1093" y="451" font-family="Liberation Sans" font-size="8.33" font-weight="bold" fill="#f4f4f4" textLength="8.50" lengthAdjust="spacingAndGlyphs">OP</text>
<text x="978" y="416" font-family="Liberation Mono" font-size="11.11" font-weight="normal" fill="#f4f4f4" textLength="54.60" lengthAdjust="spacingAndGlyphs">DVC-V304</text>
<path d="M953,429.7 H1058 Q1061.2,429.7 1061.2,433 V461 Q1061.2,464.5 1058,464.5 H953 Q950,464.5 950,461 V433 Q950,429.7 953,429.7 Z" stroke="#f4f4f4" stroke-width="2" fill="none"/>
<rect x="952" y="430.6" width="59.30" height="2.00" fill="#9a9a9a"/>
<path d="M963.5,432.6 H1011 Q1014,440 1013.8,447 Q1014,455 1011,462 H963.5 Q961.5,447 963.5,432.6" stroke="#f4f4f4" stroke-width="1.3" fill="none" />
<circle cx="971.5" cy="446.9" r="7.3" stroke="#f4f4f4" stroke-width="1.3" fill="#212830"/>
<circle cx="971.5" cy="446.9" r="4.4" stroke="#f4f4f4" stroke-width="1.1" fill="#212830"/>
<line x1="969" y1="450" x2="974" y2="443.5" stroke="#f4f4f4" stroke-width="1.1"/>
<rect x="1017.2" y="437.7" width="42.80" height="18.40" stroke="#f4f4f4" stroke-width="1.6" fill="none"/>
<path d="M1006.3,429.7 L1013,421.7 H1044.9 L1051.6,429.7 Z" fill="#f4f4f4"/>
<rect x="1016" y="424.5" width="12.00" height="2.00" fill="#212830"/>
<rect x="1031" y="424.5" width="3.00" height="2.50" fill="#212830"/>
<rect x="1038" y="424" width="3.00" height="3.00" fill="#212830"/>
<rect x="1015" y="431" width="21.50" height="5.50" fill="#212830"/>
<rect x="1038" y="431" width="20.00" height="6.00" fill="#f4f4f4"/>
<rect x="1041" y="432.5" width="2.00" height="3.50" fill="#212830"/>
<rect x="1046" y="432" width="7.00" height="1.50" fill="#212830"/>
<rect x="1054" y="432.5" width="2.00" height="3.50" fill="#212830"/>
<rect x="1015" y="457.5" width="35.00" height="5.50" fill="#212830"/>
<rect x="1050" y="456.5" width="8.00" height="7.50" fill="#f4f4f4"/>
<rect x="960.1" y="464.5" width="92.30" height="10.50" fill="#f4f4f4"/>
<rect x="962" y="466" width="5.00" height="7.50" fill="#212830"/>
<rect x="967" y="472" width="5.50" height="1.50" fill="#212830"/>
<rect x="982" y="469" width="11.00" height="1.50" fill="#212830"/>
<rect x="992" y="467" width="5.50" height="6.50" fill="#212830"/>
<rect x="999" y="469" width="6.00" height="1.50" fill="#212830"/>
<rect x="1012" y="467" width="11.00" height="1.50" fill="#212830"/>
<rect x="1012" y="470" width="10.00" height="2.80" fill="#212830"/>
<rect x="1024" y="470" width="9.00" height="2.80" fill="#212830"/>
<rect x="1035" y="470" width="5.00" height="2.80" fill="#212830"/>
<rect x="1043" y="470" width="5.50" height="2.80" fill="#212830"/>
<rect x="1030" y="467" width="4.00" height="2.00" fill="#212830"/>
<rect x="1052.4" y="464.5" width="4.60" height="6.50" fill="#f4f4f4"/>
<rect x="933.2" y="526.4" width="14.30" height="10.10" stroke="#f4f4f4" stroke-width="1.4" fill="none"/>
<text x="936.5" y="534.5" font-family="Liberation Sans" font-size="8.33" font-weight="bold" fill="#f4f4f4" textLength="7.00" lengthAdjust="spacingAndGlyphs">IP</text>
<text x="979.7" y="534.8" font-family="Liberation Sans" font-size="9.44" font-weight="bold" fill="#f4f4f4" textLength="39.20" lengthAdjust="spacingAndGlyphs">INPUT USE BY</text>
<circle cx="1064.4" cy="529" r="8.1" stroke="#f4f4f4" stroke-width="1.4" fill="#212830"/>
<text x="1060.2" y="532" font-family="Liberation Sans" font-size="8.33" font-weight="bold" fill="#f4f4f4" textLength="8.40" lengthAdjust="spacingAndGlyphs">OP</text>
<text x="1103.7" y="534.7" font-family="Liberation Sans" font-size="8.33" font-weight="bold" fill="#f4f4f4" textLength="43.30" lengthAdjust="spacingAndGlyphs">OUTPUT USE BY</text>
<line x1="933.2" y1="547" x2="1211.8" y2="547" stroke="#f4f4f4" stroke-width="1.3"/>
<line x1="933.2" y1="555" x2="1211.8" y2="555" stroke="#f4f4f4" stroke-width="1.3"/>
<line x1="933.2" y1="563" x2="1211.8" y2="563" stroke="#f4f4f4" stroke-width="1.3"/>
<line x1="933.2" y1="570.8" x2="1211.8" y2="570.8" stroke="#f4f4f4" stroke-width="1.3"/>
<line x1="933.2" y1="578.8" x2="1211.8" y2="578.8" stroke="#f4f4f4" stroke-width="1.3"/>
<rect x="933.2" y="539.5" width="278.60" height="47.00" stroke="#f4f4f4" stroke-width="1.4" fill="none"/>
<line x1="947.7" y1="539.5" x2="947.7" y2="586.5" stroke="#f4f4f4" stroke-width="1.2"/>
<line x1="949.2" y1="539.5" x2="949.2" y2="586.5" stroke="#f4f4f4" stroke-width="1.2"/>
<line x1="969.3" y1="539.5" x2="969.3" y2="586.5" stroke="#f4f4f4" stroke-width="1.2"/>
<line x1="1057.1" y1="539.5" x2="1057.1" y2="586.5" stroke="#f4f4f4" stroke-width="1.2"/>
<line x1="1058.6" y1="539.5" x2="1058.6" y2="586.5" stroke="#f4f4f4" stroke-width="1.2"/>
<line x1="1072.5" y1="539.5" x2="1072.5" y2="586.5" stroke="#f4f4f4" stroke-width="1.2"/>
<line x1="1074" y1="539.5" x2="1074" y2="586.5" stroke="#f4f4f4" stroke-width="1.2"/>
<line x1="1095" y1="539.5" x2="1095" y2="586.5" stroke="#f4f4f4" stroke-width="1.2"/>
<text x="938.8" y="545.4" font-family="Liberation Sans" font-size="5.69" font-weight="bold" fill="#f4f4f4" textLength="3.70" lengthAdjust="spacingAndGlyphs">1</text>
<text x="955.5" y="545.4" font-family="Liberation Sans" font-size="5.69" font-weight="bold" fill="#f4f4f4" textLength="6.00" lengthAdjust="spacingAndGlyphs">AI</text>
<text x="970.5" y="545.4" font-family="Liberation Sans" font-size="5.69" font-weight="bold" fill="#f4f4f4" textLength="46.92" lengthAdjust="spacingAndGlyphs">Return Air Temp.</text>
<text x="1063" y="545.4" font-family="Liberation Sans" font-size="5.69" font-weight="bold" fill="#f4f4f4" textLength="3.50" lengthAdjust="spacingAndGlyphs">1</text>
<text x="1080.7" y="545.4" font-family="Liberation Sans" font-size="5.69" font-weight="bold" fill="#f4f4f4" textLength="6.00" lengthAdjust="spacingAndGlyphs">DO</text>
<text x="1096" y="545.4" font-family="Liberation Sans" font-size="5.69" font-weight="bold" fill="#f4f4f4" textLength="77.00" lengthAdjust="spacingAndGlyphs">Electric Duct Heater Stage 1</text>
<text x="938.8" y="553.4" font-family="Liberation Sans" font-size="6.39" font-weight="bold" fill="#f4f4f4" textLength="3.70" lengthAdjust="spacingAndGlyphs">2</text>
<text x="955.5" y="553.4" font-family="Liberation Sans" font-size="6.39" font-weight="bold" fill="#f4f4f4" textLength="6.00" lengthAdjust="spacingAndGlyphs">AI</text>
<text x="970.5" y="553.4" font-family="Liberation Sans" font-size="6.39" font-weight="bold" fill="#f4f4f4" textLength="53.36" lengthAdjust="spacingAndGlyphs">Return Air Humidity</text>
<text x="1063" y="553.4" font-family="Liberation Sans" font-size="6.39" font-weight="bold" fill="#f4f4f4" textLength="3.50" lengthAdjust="spacingAndGlyphs">2</text>
<text x="1080.7" y="553.4" font-family="Liberation Sans" font-size="6.39" font-weight="bold" fill="#f4f4f4" textLength="6.00" lengthAdjust="spacingAndGlyphs">DO</text>
<text x="1096" y="553.4" font-family="Liberation Sans" font-size="6.39" font-weight="bold" fill="#f4f4f4" textLength="78.00" lengthAdjust="spacingAndGlyphs">Electric Duct Heater Stage 2</text>
<text x="938.8" y="561.4" font-family="Liberation Sans" font-size="6.39" font-weight="bold" fill="#f4f4f4" textLength="3.70" lengthAdjust="spacingAndGlyphs">3</text>
<text x="955.5" y="561.4" font-family="Liberation Sans" font-size="6.39" font-weight="bold" fill="#f4f4f4" textLength="6.00" lengthAdjust="spacingAndGlyphs">AI</text>
<text x="970.5" y="561.4" font-family="Liberation Sans" font-size="6.39" font-weight="bold" fill="#f4f4f4" textLength="55.20" lengthAdjust="spacingAndGlyphs">Return Air CO2 Sensor</text>
<text x="1063" y="561.4" font-family="Liberation Sans" font-size="6.39" font-weight="bold" fill="#f4f4f4" textLength="3.50" lengthAdjust="spacingAndGlyphs">3</text>
<text x="1080.7" y="561.4" font-family="Liberation Sans" font-size="6.39" font-weight="bold" fill="#f4f4f4" textLength="6.00" lengthAdjust="spacingAndGlyphs">DO</text>
<text x="1096" y="561.4" font-family="Liberation Sans" font-size="6.39" font-weight="bold" fill="#f4f4f4" textLength="78.00" lengthAdjust="spacingAndGlyphs">Electric Duct Heater Stage 3</text>
<text x="938.8" y="569.1999999999999" font-family="Liberation Sans" font-size="6.11" font-weight="bold" fill="#f4f4f4" textLength="3.70" lengthAdjust="spacingAndGlyphs">4</text>
<text x="955.5" y="569.1999999999999" font-family="Liberation Sans" font-size="6.11" font-weight="bold" fill="#f4f4f4" textLength="6.00" lengthAdjust="spacingAndGlyphs">DI</text>
<text x="970.5" y="569.1999999999999" font-family="Liberation Sans" font-size="6.11" font-weight="bold" fill="#f4f4f4" textLength="37.72" lengthAdjust="spacingAndGlyphs">Damper Position</text>
<text x="1063" y="569.1999999999999" font-family="Liberation Sans" font-size="6.11" font-weight="bold" fill="#f4f4f4" textLength="3.50" lengthAdjust="spacingAndGlyphs">4</text>
<text x="1080.7" y="569.1999999999999" font-family="Liberation Sans" font-size="6.11" font-weight="bold" fill="#f4f4f4" textLength="6.00" lengthAdjust="spacingAndGlyphs">DO</text>
<text x="1096" y="569.1999999999999" font-family="Liberation Sans" font-size="6.11" font-weight="bold" fill="#f4f4f4" textLength="46.70" lengthAdjust="spacingAndGlyphs">Fan Start/Stop</text>
<text x="938.8" y="577.1999999999999" font-family="Liberation Sans" font-size="6.39" font-weight="bold" fill="#f4f4f4" textLength="3.70" lengthAdjust="spacingAndGlyphs">5</text>
<text x="955.5" y="577.1999999999999" font-family="Liberation Sans" font-size="6.39" font-weight="bold" fill="#f4f4f4" textLength="6.00" lengthAdjust="spacingAndGlyphs">AI</text>
<text x="970.5" y="577.1999999999999" font-family="Liberation Sans" font-size="6.39" font-weight="bold" fill="#f4f4f4" textLength="18.40" lengthAdjust="spacingAndGlyphs">Air Flow</text>
<text x="1063" y="577.1999999999999" font-family="Liberation Sans" font-size="6.39" font-weight="bold" fill="#f4f4f4" textLength="3.50" lengthAdjust="spacingAndGlyphs">5</text>
<text x="1080.7" y="577.1999999999999" font-family="Liberation Sans" font-size="6.39" font-weight="bold" fill="#f4f4f4" textLength="6.00" lengthAdjust="spacingAndGlyphs">DO</text>
<text x="1096" y="577.1999999999999" font-family="Liberation Sans" font-size="6.39" font-weight="bold" fill="#f4f4f4" textLength="56.50" lengthAdjust="spacingAndGlyphs">Damper Open Signal</text>
<text x="1063" y="584.9" font-family="Liberation Sans" font-size="5.97" font-weight="bold" fill="#f4f4f4" textLength="3.50" lengthAdjust="spacingAndGlyphs">6</text>
<text x="1080.7" y="584.9" font-family="Liberation Sans" font-size="5.97" font-weight="bold" fill="#f4f4f4" textLength="6.00" lengthAdjust="spacingAndGlyphs">DO</text>
<text x="1096" y="584.9" font-family="Liberation Sans" font-size="5.97" font-weight="bold" fill="#f4f4f4" textLength="57.60" lengthAdjust="spacingAndGlyphs">Damper Close Signal</text>
<rect x="933.1" y="619.5" width="278.70" height="15.90" stroke="#f4f4f4" stroke-width="1.3" fill="none"/>
<line x1="933.1" y1="628.2" x2="1211.8" y2="628.2" stroke="#f4f4f4" stroke-width="1.3"/>
<line x1="948.2" y1="619.5" x2="948.2" y2="635.4" stroke="#f4f4f4" stroke-width="1.2"/>
<line x1="969.5" y1="619.5" x2="969.5" y2="635.4" stroke="#f4f4f4" stroke-width="1.2"/>
<line x1="1057.6" y1="619.5" x2="1057.6" y2="635.4" stroke="#f4f4f4" stroke-width="1.2"/>
<line x1="1073.6" y1="619.5" x2="1073.6" y2="635.4" stroke="#f4f4f4" stroke-width="1.2"/>
<line x1="1095.3" y1="619.5" x2="1095.3" y2="635.4" stroke="#f4f4f4" stroke-width="1.2"/>
<text x="937.5" y="626.5" font-family="Liberation Sans" font-size="7.36" font-weight="bold" fill="#f4f4f4" textLength="6.50" lengthAdjust="spacingAndGlyphs">DI</text>
<text x="955" y="626.5" font-family="Liberation Sans" font-size="7.36" font-weight="bold" fill="#f4f4f4" textLength="5.00" lengthAdjust="spacingAndGlyphs">A)</text>
<text x="970" y="626.2" font-family="Liberation Sans" font-size="6.94" font-weight="bold" fill="#f4f4f4" textLength="75.00" lengthAdjust="spacingAndGlyphs">Discharge Air Temperature</text>
<path d="M935.3,824 V730.3 H1218.3 V824" stroke="#f4f4f4" stroke-width="1.5" fill="none" />
</svg>
</body></html>
